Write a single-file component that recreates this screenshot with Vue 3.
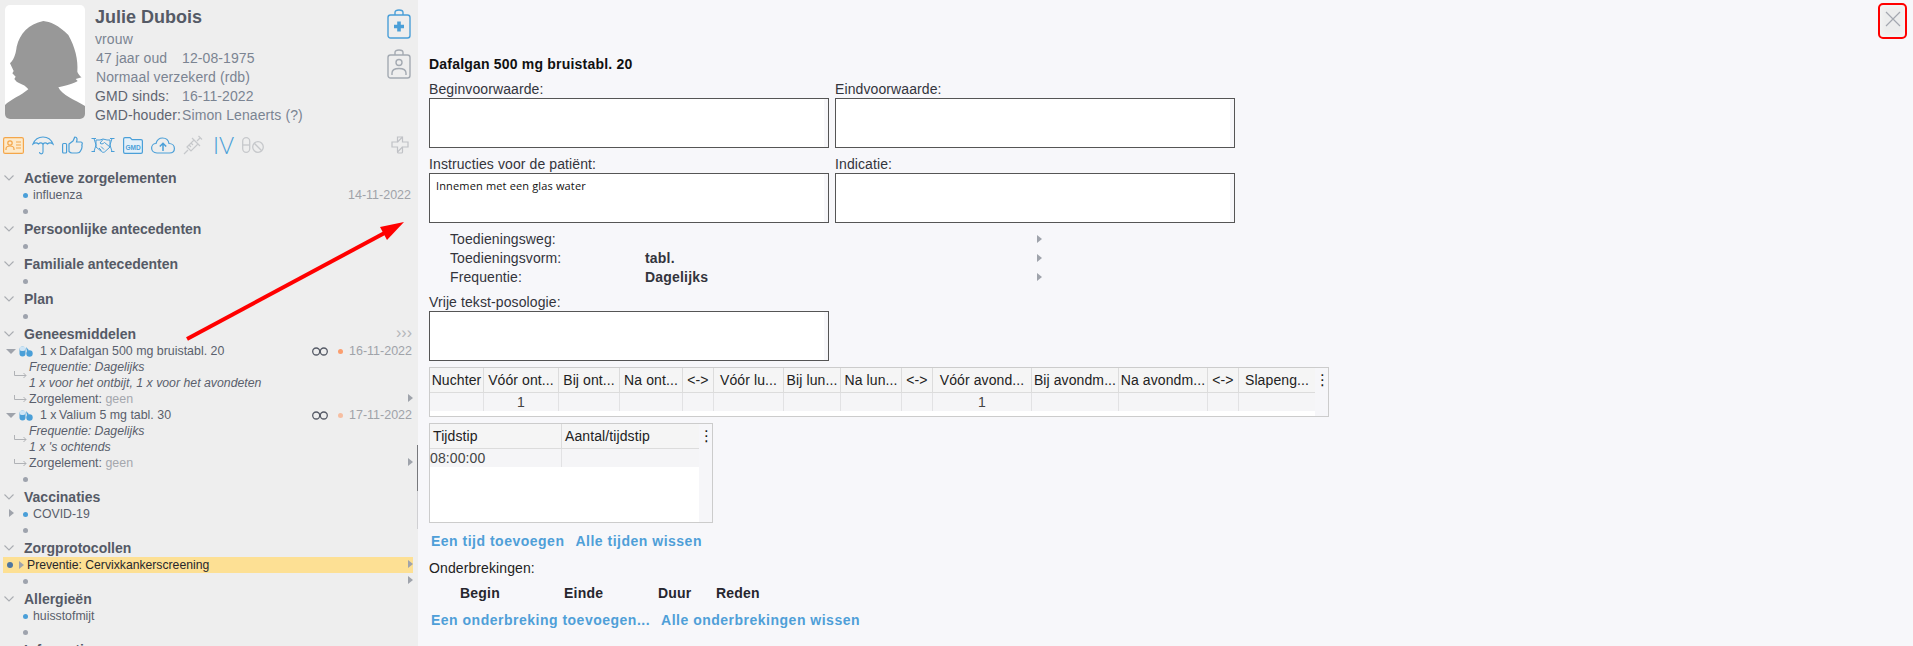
<template>
  <div class="page">
    <!-- linker zijbalk met patiëntgegevens -->
    <aside class="side">
      <div class="patient">
        <div class="photo">
          <svg viewBox="0 0 240 342" width="80" height="114">
            <path fill="#989898" d="M0 342V300C15 285 50 270 70 253C62 240 45 236 35 230L28 222L32 215L22 205L26 198L15 175C30 160 33 140 35 125C45 85 70 57 115 48C135 50 160 60 190 90C210 125 220 165 217 200C222 212 230 217 230 217L212 222L218 228C205 236 190 240 160 247C170 270 210 285 240 303V342Z" />
          </svg>
        </div>
        <div class="info">
          <div class="name">Julie Dubois</div>
          <div class="line">vrouw</div>
          <div class="line in1"><span class="w1">47 jaar oud</span>12-08-1975</div>
          <div class="line in1">Normaal verzekerd (rdb)</div>
          <div class="line"><span class="w2 dark">GMD sinds:</span>16-11-2022</div>
          <div class="line"><span class="w2 dark">GMD-houder:</span>Simon Lenaerts (?)</div>
        </div>
        <div class="clips">
          <svg width="24" height="30" viewBox="0 0 24 30" fill="none" stroke="#4a9fd8" stroke-width="1.4">
            <rect x="1" y="6" width="22" height="23" rx="2.5" />
            <path d="M8 6V3.5C8 2 9.5 1 12 1S16 2 16 3.5V6" />
            <path d="M12 12.5V22.5M7 17.5H17" stroke-width="3.6" />
          </svg>
          <svg width="24" height="30" viewBox="0 0 24 30" fill="none" stroke="#a4aab2" stroke-width="1.4">
            <rect x="1" y="6" width="22" height="23" rx="2.5" />
            <path d="M8 6V3.5C8 2 9.5 1 12 1S16 2 16 3.5V6" />
            <circle cx="12" cy="13.5" r="3" />
            <path d="M5 26V24C5 21 8 19.5 12 19.5S19 21 19 24V26" />
          </svg>
        </div>
      </div>

      <div class="tools">
        <svg width="21" height="17" viewBox="0 0 21 17" fill="#fdeacb" stroke="#f4a64a" stroke-width="1.2">
          <rect x=".6" y=".6" width="19.8" height="15.8" rx="1.5" />
          <circle cx="7" cy="6" r="2.2" fill="none" />
          <path d="M3 13V12C3 10 5 9 7 9S11 10 11 12V13M13 5H18M13 8H18M13 11H18" fill="none" />
        </svg>
        <svg width="22" height="19" viewBox="0 0 22 19" fill="none" stroke="#4a9fd8" stroke-width="1.1">
          <path d="M1 8C3 3 7 1 11 1S19 3 21 8C19 6.500 17 6.500 15.500 8C14 6.500 12.500 6.500 11 8C9.500 6.500 8 6.500 6.500 8C5 6.500 3 6.500 1 8Z" />
          <path d="M11 8V16C11 18.500 7.500 18.500 7.500 16" />
        </svg>
        <svg width="21" height="18" viewBox="0 0 21 18" fill="none" stroke="#4a9fd8" stroke-width="1.2">
          <rect x=".6" y="7.500" width="4" height="9.500" rx="1" />
          <path d="M7 8L11 5C12 3.500 12 2 13 1C15 1 15.500 3 14.500 6H19C20.500 6 20.500 8 19.800 9C20.500 11 19.800 13 18.500 15C18 16.500 17 17 15 17H10C8.500 17 7.500 16 7 15.500Z" />
        </svg>
        <svg width="24" height="16" viewBox="0 0 24 16" fill="none" stroke="#4a9fd8" stroke-width="1">
          <path d="M.5 1.500H5M19 1.500H23.500M.5 14.500H4M20 14.500H23.500" />
          <path d="M3 1.500L5 8L3 14.500M21 1.500L19 8L21 14.500" />
          <path d="M5 3H9L12 2L16 3H19V10L13.500 15C12.500 15.500 11.500 15.500 10.500 14.500L5 10Z" />
          <path d="M12 2.500L9 6C10 7.500 12 7 13.500 5.500L19 10M8 11L10.500 13.500M10 9.500L13 12.500" />
        </svg>
        <svg width="20" height="17" viewBox="0 0 20 17" fill="#e4f0f9" stroke="#4a9fd8" stroke-width="1.2">
          <path d="M.6 2C.6 1 1 .6 2 .6H7L9 2.600H18C19 2.600 19.400 3 19.400 4V15C19.400 16 19 16.400 18 16.400H2C1 16.400 .6 16 .6 15Z" />
          <text x="10" y="12.500" text-anchor="middle" class="gmd">GMD</text>
        </svg>
        <svg width="24" height="17" viewBox="0 0 24 17" fill="none" stroke="#4a9fd8" stroke-width="1.2">
          <path d="M6 16C2.500 16 .6 13.500 .6 11C.6 8.500 2.500 6.500 5 6.500C6 3 8.500 1 11.500 1C15 1 17.500 3.500 18 6.500C21 6.500 23.400 8.500 23.400 11.500C23.400 14 21.500 16 18.500 16Z" />
          <path d="M12 14V6.500M8.800 9.500L12 6.300L15.200 9.500" stroke-width="1.5" />
        </svg>
        <svg width="22" height="20" viewBox="0 0 22 20" fill="none" stroke="#c6c8cb" stroke-width="1.2">
          <path d="M1 19L5 15M4 12L11 5L15 9L8 16ZM9 3L17 11M14 6L17.500 2.500M15.500 1L19 4.500" />
          <path d="M6 10L8 12M8 8L10 10" />
        </svg>
        <span class="iv">IV</span>
        <svg width="22" height="16" viewBox="0 0 22 16" fill="none" stroke="#c6c8cb" stroke-width="1.3">
          <rect x=".7" y=".7" width="7" height="14.600" rx="3.500" />
          <path d="M.7 8H7.700" />
          <circle cx="16" cy="10" r="5.300" />
          <path d="M12.300 6.300L19.700 13.700" />
        </svg>
        <svg class="cross" width="18" height="18" viewBox="0 0 18 18" fill="none" stroke="#c0c2c6" stroke-width="1.2">
          <path d="M6.500 1H11.500V6H17V11H11.500V16C11.500 16.500 11 17 10.500 17H7.500C7 17 6.500 16.500 6.500 16V11H1V6H6.500Z" />
          <path d="M11.500 1L6.500 6M11.500 11L6.500 16" />
        </svg>
      </div>

      <section v-for="sec in sections" :key="sec.title" class="sec">
        <h3 class="sec-title">
          <svg class="chev" width="10" height="6" viewBox="0 0 10 6" fill="none" stroke="#aaadb2" stroke-width="1.100"><path d="M.5 .5L5 5L9.500 .5" /></svg>
          {{ sec.title }}
          <span v-if="sec.more" class="more">&#8250;&#8250;&#8250;</span>
        </h3>
        <template v-for="(row, i) in sec.rows" :key="i">
          <!-- medicatieregel -->
          <template v-if="row.drug">
            <div class="row drug">
              <span class="caret-down"></span>
              <svg class="pill" width="14" height="11" viewBox="0 0 14 11">
                <rect x=".5" y=".5" width="6" height="10" rx="3" fill="#4a9fd8" />
                <rect x=".5" y=".5" width="6" height="4.500" rx="2.200" fill="#cfe5f5" />
                <circle cx="10.500" cy="7.500" r="3.200" fill="#4a9fd8" />
                <path d="M7 1L10 4.200L8 5.500Z" fill="#4a9fd8" />
              </svg>
              <span class="qty">1 x</span>{{ row.drug }}
              <span class="inf">
                <svg width="16" height="9" viewBox="0 0 16 9" fill="none" stroke="#555a66" stroke-width="1.300"><circle cx="4.200" cy="4.500" r="3.500" /><circle cx="11.800" cy="4.500" r="3.500" /></svg>
              </span>
              <span class="dot orange" :style="{ opacity: row.fade }"></span>
              <span class="date">{{ row.date }}</span>
            </div>
            <div class="freq">
              <svg class="hook" width="13" height="8" viewBox="0 0 13 8" fill="none" stroke="#b0b2b6"><path d="M.5 0V4.500H12M9.500 2L12 4.500L9.500 7" /></svg>
              <div>
                <div class="row sub"><em>Frequentie: Dagelijks</em></div>
                <div class="row sub"><em>{{ row.posology }}</em></div>
              </div>
            </div>
            <div class="row zorg">
              <svg class="hook" width="13" height="8" viewBox="0 0 13 8" fill="none" stroke="#b0b2b6"><path d="M.5 0V4.500H12M9.500 2L12 4.500L9.500 7" /></svg>
              Zorgelement:&nbsp;<span class="geen">geen</span>
              <span class="tri end"></span>
            </div>
          </template>
          <!-- geselecteerde regel -->
          <div v-else-if="row.active" class="row active">
            <span class="dot big"></span>
            <span class="tri lead"></span>
            <span>{{ row.text }}</span>
            <span class="tri end"></span>
          </div>
          <!-- gewone regel, eventueel leeg -->
          <div v-else class="row item">
            <span v-if="row.caret" class="tri caret"></span>
            <span class="dot" :class="{ blue: row.text }"></span>
            <span class="txt">{{ row.text }}</span>
            <span v-if="row.date" class="date end-date">{{ row.date }}</span>
            <span v-if="row.arrow" class="tri end"></span>
          </div>
        </template>
      </section>

      <div class="thumb"></div>
      <div class="thumb low"></div>
    </aside>

    <!-- detailpaneel -->
    <main class="detail">
      <button class="close">
        <svg width="16" height="16" viewBox="0 0 16 16" stroke="#a4a8b0" stroke-width="1.200"><path d="M1 1L15 15M15 1L1 15" /></svg>
      </button>

      <div class="title">Dafalgan 500 mg bruistabl. 20</div>

      <div class="pair">
        <div><label>Beginvoorwaarde:</label><div class="box"></div></div>
        <div><label>Eindvoorwaarde:</label><div class="box"></div></div>
      </div>
      <div class="pair second">
        <div><label>Instructies voor de patiënt:</label><div class="box"><span class="note">Innemen met een glas water</span></div></div>
        <div><label>Indicatie:</label><div class="box"></div></div>
      </div>

      <div class="defs">
        <div v-for="d in defs" :key="d.label" class="def">
          <span class="def-label">{{ d.label }}</span>
          <strong class="def-value">{{ d.value }}</strong>
          <span class="tri"></span>
        </div>
      </div>

      <label class="free">Vrije tekst-posologie:</label>
      <div class="box"></div>

      <div class="grid wide">
        <div class="grid-main">
          <div class="grid-row head" :style="{ gridTemplateColumns: doseCols }">
            <span v-for="h in doseHead" :key="h.key">{{ h.label }}</span>
          </div>
          <div class="grid-row body" :style="{ gridTemplateColumns: doseCols }">
            <span v-for="h in doseHead" :key="h.key">{{ h.value }}</span>
          </div>
        </div>
        <div class="grid-side">&#8942;</div>
      </div>

      <div class="grid times">
        <div class="grid-main">
          <div class="grid-row head left" style="grid-template-columns: 132px 138px">
            <span>Tijdstip</span><span>Aantal/tijdstip</span>
          </div>
          <div class="grid-row body left" style="grid-template-columns: 132px 138px">
            <span>08:00:00</span><span></span>
          </div>
        </div>
        <div class="grid-side">&#8942;</div>
      </div>

      <div class="links first">
        <a>Een tijd toevoegen</a>
        <a>Alle tijden wissen</a>
      </div>

      <div class="breaks">Onderbrekingen:</div>
      <div class="break-head">
        <strong style="width: 104px">Begin</strong>
        <strong style="width: 94px">Einde</strong>
        <strong style="width: 58px">Duur</strong>
        <strong>Reden</strong>
      </div>

      <div class="links">
        <a>Een onderbreking toevoegen...</a>
        <a>Alle onderbrekingen wissen</a>
      </div>
    </main>

    <!-- rode annotatiepijl over de pagina -->
    <svg class="annot" width="420" height="345" viewBox="0 0 420 345">
      <path d="M187 339L392 229" stroke="#f00" stroke-width="4" fill="none" />
      <path d="M404 222L380 227L387 240Z" fill="#f00" />
    </svg>
  </div>
</template>

<script setup>
const sections = [
  { title: 'Actieve zorgelementen', rows: [{ text: 'influenza', date: '14-11-2022' }, {}] },
  { title: 'Persoonlijke antecedenten', rows: [{}] },
  { title: 'Familiale antecedenten', rows: [{}] },
  { title: 'Plan', rows: [{}] },
  {
    title: 'Geneesmiddelen',
    more: true,
    rows: [
      { drug: 'Dafalgan 500 mg bruistabl. 20', date: '16-11-2022', fade: 1, posology: '1 x voor het ontbijt, 1 x voor het avondeten' },
      { drug: 'Valium 5 mg tabl. 30', date: '17-11-2022', fade: 0.6, posology: "1 x 's ochtends" },
      {}
    ]
  },
  { title: 'Vaccinaties', rows: [{ text: 'COVID-19', caret: true }, {}] },
  { title: 'Zorgprotocollen', rows: [{ active: true, text: 'Preventie: Cervixkankerscreening' }, { arrow: true }] },
  { title: 'Allergieën', rows: [{ text: 'huisstofmijt' }, {}] },
  { title: 'Informatie', rows: [] }
]

const defs = [
  { label: 'Toedieningsweg:', value: '' },
  { label: 'Toedieningsvorm:', value: 'tabl.' },
  { label: 'Frequentie:', value: 'Dagelijks' }
]

const doseWidths = [54, 75, 61, 63, 31, 70, 57, 61, 31, 99, 87, 89, 31, 77]
const doseCols = doseWidths.map(w => w + 'px').join(' ')
const doseHead = [
  'Nuchter', 'Vóór ont...', 'Bij ont...', 'Na ont...', '<->', 'Vóór lu...', 'Bij lun...',
  'Na lun...', '<->', 'Vóór avond...', 'Bij avondm...', 'Na avondm...', '<->', 'Slapeng...'
].map((label, key) => ({ key, label, value: key === 1 || key === 9 ? '1' : '' }))
</script>

<style>
html, body {
  margin: 0;
  height: 100%;
  overflow: hidden;
  background: #f7f7fa;
}
</style>

<style scoped>
.page {
  position: relative;
  display: flex;
  width: 1913px;
  height: 646px;
  overflow: hidden;
  font-family: "Liberation Sans", Arial, sans-serif;
  font-size: 14px;
  color: #33343c;
}

.side {
  position: relative;
  width: 418px;
  height: 646px;
  flex: none;
  overflow: hidden;
  background: #eeeeee;
  font-size: 12px;
  color: #5a5f6c;
}

.patient {
  display: flex;
  height: 125px;
  padding: 5px 7px 0 5px;
  box-sizing: border-box;
}
.photo {
  width: 80px;
  height: 114px;
  flex: none;
  overflow: hidden;
  border-radius: 5px;
  background: #fff;
}
.photo svg { display: block; }
.info { flex: 1; margin-left: 10px; font-size: 14px; letter-spacing: .1px; color: #7b8492; }
.name { height: 25px; font-size: 18px; line-height: 25px; font-weight: bold; letter-spacing: 0; color: #555a66; }
.line { height: 19px; line-height: 19px; white-space: nowrap; }
.in1 { padding-left: 1px; }
.w1 { display: inline-block; width: 86px; }
.w2 { display: inline-block; width: 87px; }
.dark { color: #5f6470; }
.clips { display: flex; flex-direction: column; gap: 10px; margin-top: 4px; }
.clips svg { display: block; }

.tools {
  display: flex;
  align-items: center;
  gap: 8px;
  height: 44px;
  padding: 0 9px 4px 3px;
  box-sizing: border-box;
}
.tools svg { flex: none; }
.gmd { font: bold 6.500px "Liberation Sans", Arial, sans-serif; fill: #4a9fd8; stroke: none; }
.iv { width: 21px; font-family: Lato, "Liberation Sans", sans-serif; font-weight: 300; font-size: 23px; line-height: 20px; color: #4a9fd8; }
.cross { margin-left: auto; }

.sec { margin-bottom: 1px; }
.sec-title {
  position: relative;
  display: flex;
  align-items: center;
  height: 18px;
  margin: 0;
  padding-left: 24px;
  font-size: 14px;
  line-height: 18px;
  font-weight: bold;
  color: #555a66;
}
.chev { position: absolute; left: 4px; top: 6px; }
.more { position: absolute; right: 6px; top: 0; font-weight: normal; font-size: 16px; line-height: 16px; color: #b4b6ba; }

.row {
  position: relative;
  display: flex;
  align-items: center;
  height: 16px;
  line-height: 16px;
  white-space: nowrap;
}
.drug { font-size: 12.400px; }
.item { padding-left: 23px; }
.txt { margin-left: 5px; font-size: 12.300px; }
.dot {
  display: inline-block;
  width: 5px;
  height: 5px;
  flex: none;
  border-radius: 50%;
  background: #9ea3ad;
}
.dot.blue { background: #4a9fd8; }
.dot.orange { background: #fb9e6e; margin-right: 6px; }
.dot.big { position: absolute; left: 4px; top: 5px; width: 6px; height: 6px; background: #4f76a0; }
.date { color: #a0a3a9; font-size: 12.500px; }
.end-date { margin-left: auto; margin-right: 7px; }

.tri {
  display: inline-block;
  width: 0;
  height: 0;
  flex: none;
  border-style: solid;
  border-width: 4.500px 0 4.500px 5px;
  border-color: transparent transparent transparent #9fa3ab;
}
.tri.end { position: absolute; right: 5px; top: 3px; }
.tri.caret { position: absolute; left: 9px; top: 3px; }
.tri.lead { margin-left: 16px; margin-right: 3px; }

.caret-down {
  width: 0;
  height: 0;
  margin-left: 6px;
  border-style: solid;
  border-width: 5px 5px 0;
  border-color: #9fa3ab transparent transparent;
}
.pill { margin-left: 3px; }
.qty { width: 19px; margin-left: 7px; }
.inf { display: flex; margin-left: auto; margin-right: 10px; }
.row .inf + .dot + .date { margin-right: 6px; }

.freq { position: relative; padding-left: 29px; }
.freq .hook { position: absolute; left: 14px; top: 12px; }
.sub em { font-style: italic; font-size: 12.300px; color: #5a5f6c; }
.zorg { padding-left: 29px; font-size: 12.400px; }
.zorg .hook { position: absolute; left: 14px; top: 4px; }
.geen { color: #a4a7ad; }

.active {
  margin: 0 5px 0 3px;
  background: #fde094;
  color: #27272c;
  font-size: 12.200px;
}
.active .tri.end { right: 0; }

.thumb { position: absolute; left: 417px; top: 445px; width: 1px; height: 46px; background: #77787c; }
.thumb.low { top: 491px; height: 38px; background: #cfcfd2; }

.detail {
  position: relative;
  flex: 1;
  padding: 56px 0 0 11px;
  font-size: 14px;
  letter-spacing: .1px;
  background: #f7f7fa;
}

.close {
  position: absolute;
  top: 3px;
  right: 6px;
  display: flex;
  align-items: center;
  justify-content: center;
  width: 29px;
  height: 36px;
  padding: 0 0 4px;
  box-sizing: border-box;
  border: 2px solid #f00;
  border-radius: 5px;
  background: #eceded;
  box-shadow: inset 0 0 6px #fafafa;
}

.title { height: 16px; margin-bottom: 8px; font-size: 14px; line-height: 16px; font-weight: bold; letter-spacing: .2px; color: #111; }
label { display: block; height: 18px; line-height: 18px; }

.pair { display: flex; gap: 6px; }
.pair.second { margin-top: 7px; }

.box {
  width: 400px;
  height: 50px;
  box-sizing: border-box;
  border: 1px solid #555;
  background: #fff;
  box-shadow: inset -4px 0 0 #f7f7fa;
}
.note {
  display: block;
  padding: 5px 0 0 6px;
  font-family: "Open Sans", "DejaVu Sans", sans-serif;
  font-size: 11px;
  line-height: 14px;
  letter-spacing: .15px;
  color: #111;
}

.defs { margin-top: 6px; padding-left: 21px; width: 592px; }
.def { display: flex; align-items: center; height: 19px; }
.def-label { width: 195px; }
.def-value { flex: 1; letter-spacing: .2px; color: #33343c; }
.def .tri { border-width: 4px 0 4px 5px; }

.free { margin-top: 7px; }

.grid {
  display: flex;
  box-sizing: border-box;
  border: 1px solid #cccccc;
  background: #fff;
}
.grid.wide { width: 900px; height: 50px; margin-top: 6px; }
.grid.times { width: 284px; height: 100px; margin-top: 6px; }
.grid-main { flex: 1; min-width: 0; }
.grid-side {
  width: 13px;
  flex: none;
  box-sizing: border-box;
  padding-right: 2px;
  background: #f6f6f9;
  font-family: "DejaVu Sans", sans-serif;
  font-size: 15px;
  line-height: 24px;
  text-align: center;
  color: #111;
}
.grid-row { display: grid; }
.grid-row span {
  box-sizing: border-box;
  overflow: hidden;
  border-right: 1px solid #e2e2e4;
  white-space: nowrap;
  text-align: center;
}
.grid-row.head { height: 25px; background: #f5f5f5; border-bottom: 1px solid #dcdcdc; box-sizing: border-box; }
.grid-row.head span { line-height: 24px; color: #222; border-right-color: #dcdcdc; }
.grid-row.body { height: 18px; background: #f5f5f7; }
.grid-row.body span { line-height: 18px; color: #444; }
.grid-row.left span { padding-left: 3px; text-align: left; }
.grid-row.left.body span { padding-left: 0; }

.links { display: flex; gap: 11px; height: 18px; padding-left: 2px; line-height: 18px; font-weight: bold; letter-spacing: .5px; }
.links.first { margin-top: 9px; }
.links a { color: #4f9fd8; }

.breaks { height: 18px; margin-top: 9px; line-height: 18px; color: #222; }
.break-head { display: flex; height: 18px; margin: 7px 0 9px; padding-left: 31px; line-height: 18px; letter-spacing: .2px; color: #26262e; }

.annot { position: absolute; left: 0; top: 0; pointer-events: none; }
</style>
